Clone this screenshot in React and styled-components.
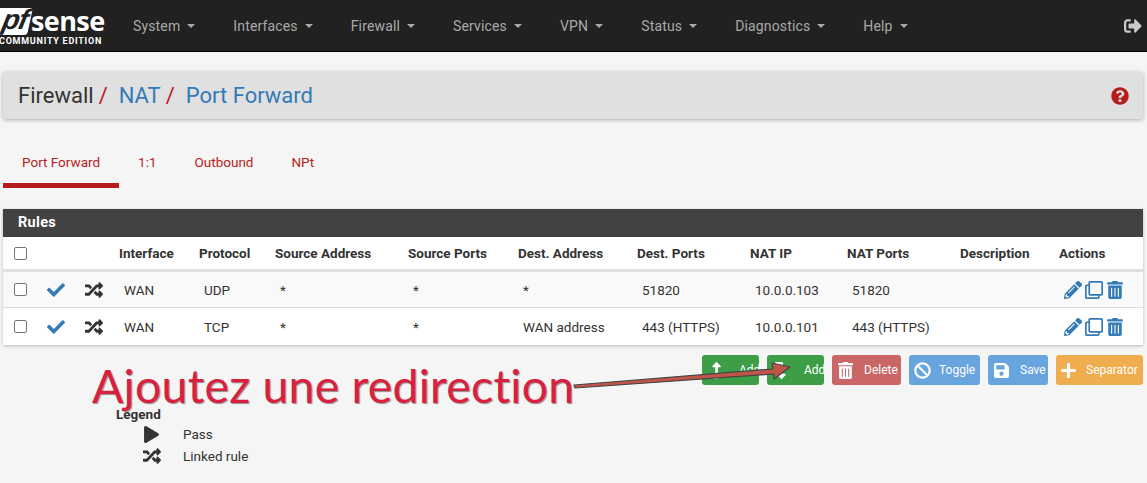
import React from "react";
import styled, { createGlobalStyle } from "styled-components";
import {
  FaBan,
  FaCheck,
  FaLevelDownAlt,
  FaLevelUpAlt,
  FaPencilAlt,
  FaPlay,
  FaPlus,
  FaQuestionCircle,
  FaRandom,
  FaRegClone,
  FaSave,
  FaSignOutAlt,
  FaTrashAlt,
} from "react-icons/fa";

const GlobalStyle = createGlobalStyle`
  html, body {
    margin: 0;
    height: 483px;
    overflow: hidden;
    background: #f5f5f5;
    font-family: Roboto, "Liberation Sans", sans-serif;
    color: #333;
  }
`;

const Page = styled.div`
  position: relative;
  width: 1147px;
  height: 483px;
  overflow: hidden;
`;

const Navbar = styled.nav`
  display: flex;
  align-items: center;
  height: 51px;
  background: #212121;
  border-bottom: 1px solid #000;
  padding-right: 5px;
`;

const Logo = styled.div`
  width: 133px;
  height: 51px;
  flex: none;
  padding-top: 7px;
  box-sizing: border-box;
  color: #fff;
`;

const LogoTop = styled.div`
  display: flex;
  align-items: center;
  height: 28px;
`;

const LogoPf = styled.span`
  display: block;
  width: 36px;
  height: 27px;
  margin-left: -6px;
  background: #fff;
  color: #212121;
  border-radius: 3px;
  transform: skewX(-12deg);
  font: italic 700 28px/24px "Liberation Sans", sans-serif;
  text-align: right;
  padding-right: 3px;
  box-sizing: border-box;
  letter-spacing: -1px;
`;

const LogoSense = styled.span`
  font: 700 27px/28px "Open Sans", sans-serif;
  margin-left: 1px;
  letter-spacing: -0.6px;
`;

const LogoEdition = styled.div`
  font: 700 9px/10px Roboto, sans-serif;
  letter-spacing: 0.75px;
  white-space: nowrap;
  margin-top: 1px;
  margin-left: -1px;
`;

const NavList = styled.div`
  display: flex;
  flex: 1;
  gap: 38px;
`;

const NavItem = styled.span`
  display: flex;
  align-items: center;
  gap: 7px;
  font-size: 14px;
  letter-spacing: 0.15px;
  color: #a9a9a9;
`;

const Caret = styled.i`
  display: block;
  width: 0;
  height: 0;
  border-left: 4px solid transparent;
  border-right: 4px solid transparent;
  border-top: 4px solid #a9a9a9;
`;

const LogoutIcon = styled(FaSignOutAlt)`
  color: #c9c9c9;
  font-size: 18px;
`;

const Breadcrumb = styled.div`
  display: flex;
  align-items: center;
  justify-content: space-between;
  height: 47px;
  margin: 20px 4px 0 3px;
  padding: 0 15px;
  background: #e0e0e0;
  border-radius: 3px;
  box-shadow: 0 1px 4px rgba(0, 0, 0, 0.3);
  font-size: 22px;
`;

const Crumbs = styled.div`
  display: flex;
  align-items: baseline;
  white-space: nowrap;
`;

const Crumb = styled.span`
  color: ${(p) => (p.$link ? "#337ab7" : "#333")};
`;

const Slash = styled.span`
  color: #b71c1c;
  margin: 0 11px 0 5px;
`;

const HelpIcon = styled(FaQuestionCircle)`
  color: #b71c1c;
  font-size: 18px;
  margin-right: -1px;
`;

const Tabs = styled.div`
  display: flex;
  margin: 24px 0 0 3px;
  height: 45px;
`;

const Tab = styled.span`
  display: block;
  box-sizing: border-box;
  padding: 11px 19px 0;
  font-size: 13.5px;
  color: #b71c1c;
  border-bottom: 5px solid ${(p) => (p.$active ? "#b71c1c" : "transparent")};
  margin-right: ${(p) => p.$gap}px;
`;

const Panel = styled.section`
  margin: 21px 4px 0 3px;
  background: #fff;
  box-shadow: 0 1px 3px rgba(0, 0, 0, 0.25);
`;

const PanelTitle = styled.h2`
  margin: 0;
  height: 28px;
  padding-left: 15px;
  background: #424242;
  color: #fff;
  font-size: 14.5px;
  font-weight: 700;
  line-height: 28px;
  letter-spacing: 0.3px;
`;

const Row = styled.div`
  display: grid;
  grid-template-columns: 41px 37px 38px 80px 76px 133px 110px 119px 113px 97px 113px 99px 84px;
  align-items: center;
  box-sizing: border-box;
  height: ${(p) => p.$height}px;
  background: ${(p) => p.$bg || "#fff"};
  border-bottom: ${(p) => p.$rule}px solid ${(p) => (p.$rule > 1 ? "#e0e0e0" : "#ddd")};
`;

const HeadCell = styled.span`
  font-size: 13.5px;
  font-weight: 700;
  white-space: nowrap;
`;

const Cell = styled.span`
  font-size: 13.5px;
  padding-left: 5px;
  white-space: nowrap;
`;

const CheckCell = styled.span`
  display: flex;
  padding-left: 11px;
`;

const Box = styled.input.attrs({ type: "checkbox", readOnly: true })`
  appearance: none;
  width: 13px;
  height: 13px;
  margin: 0;
  background: #fff;
  border: 1px solid #767676;
  border-radius: 2px;
`;

const IconCell = styled.span`
  display: flex;
  align-items: center;
  padding-left: ${(p) => p.$pad}px;
  color: ${(p) => p.$color};
  font-size: ${(p) => p.$size}px;
`;

const Actions = styled.span`
  display: flex;
  align-items: center;
  gap: 3px;
  padding-left: 5px;
  color: #337ab7;
  font-size: 18px;
`;

const ButtonBar = styled.div`
  display: flex;
  justify-content: flex-end;
  gap: 8px;
  margin: 10px 4px 0 0;
`;

const Button = styled.span`
  display: flex;
  align-items: center;
  gap: ${(p) => p.$gap}px;
  box-sizing: border-box;
  width: ${(p) => p.$width}px;
  height: 30px;
  padding-left: ${(p) => p.$pad}px;
  border-radius: 3px;
  background: ${(p) => p.$bg};
  color: #fff;
  font-size: 12px;
  svg {
    font-size: 17px;
    flex: none;
  }
`;

const Legend = styled.div`
  margin: 21px 0 0 116px;
  font-size: 13.5px;
`;

const LegendTitle = styled.div`
  font-weight: 700;
  line-height: 16px;
`;

const LegendRow = styled.div`
  display: grid;
  grid-template-columns: 28px 1fr;
  align-items: center;
  height: 22px;
  margin-left: 27px;
  margin-top: ${(p) => p.$top || 0}px;
  svg {
    font-size: ${(p) => p.$icon}px;
  }
  span {
    padding-left: 12px;
  }
`;

const Callout = styled.div`
  position: absolute;
  left: 92px;
  top: 356px;
  font: 400 46.5px/58px Lato, "Open Sans", sans-serif;
  color: #d9203f;
  letter-spacing: 0.2px;
  white-space: nowrap;
  text-shadow: 1px 1px 1px rgba(60, 60, 60, 0.55);
`;

const ArrowLayer = styled.svg`
  position: absolute;
  left: 570px;
  top: 355px;
`;

const navItems = ["System", "Interfaces", "Firewall", "Services", "VPN", "Status", "Diagnostics", "Help"];

const rules = [
  { proto: "UDP", dest: "*", destPorts: "51820", ip: "10.0.0.103", natPorts: "51820", bg: "#f9f9f9", rule: 2 },
  { proto: "TCP", dest: "WAN address", destPorts: "443 (HTTPS)", ip: "10.0.0.101", natPorts: "443 (HTTPS)", rule: 0 },
];

const heads = ["Interface", "Protocol", "Source Address", "Source Ports", "Dest. Address", "Dest. Ports", "NAT IP", "NAT Ports", "Description", "Actions"];

export default function App() {
  return (
    <Page>
      <GlobalStyle />
      <Navbar>
        <Logo>
          <LogoTop>
            <LogoPf>pf</LogoPf>
            <LogoSense>sense</LogoSense>
          </LogoTop>
          <LogoEdition>COMMUNITY EDITION</LogoEdition>
        </Logo>
        <NavList>
          {navItems.map((item) => (
            <NavItem key={item}>
              {item} <Caret />
            </NavItem>
          ))}
        </NavList>
        <LogoutIcon />
      </Navbar>

      <Breadcrumb>
        <Crumbs>
          <Crumb>Firewall</Crumb>
          <Slash>/</Slash>
          <Crumb $link>NAT</Crumb>
          <Slash>/</Slash>
          <Crumb $link>Port Forward</Crumb>
        </Crumbs>
        <HelpIcon />
      </Breadcrumb>

      <Tabs>
        <Tab $active>Port Forward</Tab>
        <Tab>1:1</Tab>
        <Tab>Outbound</Tab>
        <Tab>NPt</Tab>
      </Tabs>

      <Panel>
        <PanelTitle>Rules</PanelTitle>
        <Row $height={35} $rule={3}>
          <CheckCell>
            <Box />
          </CheckCell>
          <span />
          <span />
          {heads.map((h) => (
            <HeadCell key={h}>{h}</HeadCell>
          ))}
        </Row>
        {rules.map((r) => (
          <Row key={r.proto} $height={r.rule ? 36 : 37} $rule={r.rule ? 1 : 0} $bg={r.bg}>
            <CheckCell>
              <Box />
            </CheckCell>
            <IconCell $pad={3} $color="#337ab7" $size={18}>
              <FaCheck />
            </IconCell>
            <IconCell $pad={4} $color="#333" $size={18}>
              <FaRandom />
            </IconCell>
            <Cell>WAN</Cell>
            <Cell>{r.proto}</Cell>
            <Cell>*</Cell>
            <Cell>*</Cell>
            <Cell>{r.dest}</Cell>
            <Cell>{r.destPorts}</Cell>
            <Cell>{r.ip}</Cell>
            <Cell>{r.natPorts}</Cell>
            <span />
            <Actions>
              <FaPencilAlt />
              <FaRegClone />
              <FaTrashAlt />
            </Actions>
          </Row>
        ))}
      </Panel>

      <ButtonBar>
        <Button $bg="#3d9e47" $width={57} $pad={5} $gap={15}>
          <FaLevelUpAlt />
          Add
        </Button>
        <Button $bg="#3d9e47" $width={57} $pad={5} $gap={15}>
          <FaLevelDownAlt />
          Add
        </Button>
        <Button $bg="#cb6667" $width={69} $pad={5} $gap={10}>
          <FaTrashAlt />
          Delete
        </Button>
        <Button $bg="#68a4de" $width={71} $pad={5} $gap={8}>
          <FaBan />
          Toggle
        </Button>
        <Button $bg="#68a4de" $width={60} $pad={5} $gap={10}>
          <FaSave />
          Save
        </Button>
        <Button $bg="#f0ad4e" $width={87} $pad={4} $gap={9}>
          <FaPlus />
          Separator
        </Button>
      </ButtonBar>

      <Legend>
        <LegendTitle>Legend</LegendTitle>
        <LegendRow $icon={17} $top={1}>
          <FaPlay />
          <span>Pass</span>
        </LegendRow>
        <LegendRow $icon={18}>
          <FaRandom />
          <span>Linked rule</span>
        </LegendRow>
      </Legend>

      <Callout>Ajoutez une redirection</Callout>
      <ArrowLayer width="230" height="40" viewBox="0 0 230 40">
        <path
          d="M4 30 L203 14 L202 8 L220 12 L204 24 L204 19 L5 33 Z"
          fill="#c0564a"
          stroke="#444"
          strokeWidth="1.2"
          strokeLinejoin="round"
        />
      </ArrowLayer>
    </Page>
  );
}
